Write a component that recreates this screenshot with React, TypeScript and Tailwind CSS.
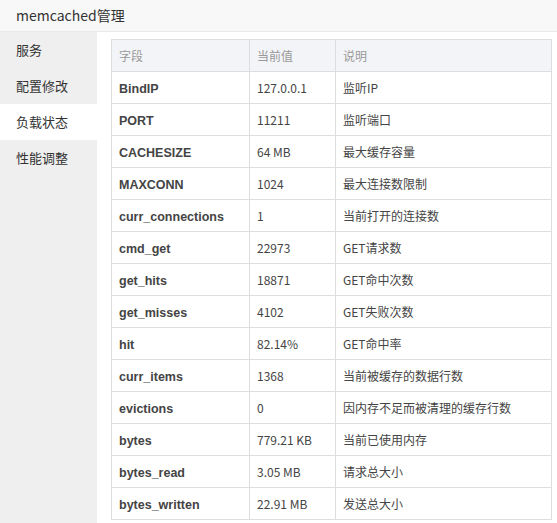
import React from "react";

const rows: [string, string, string][] = [
  ["BindIP", "127.0.0.1", "监听IP"],
  ["PORT", "11211", "监听端口"],
  ["CACHESIZE", "64 MB", "最大缓存容量"],
  ["MAXCONN", "1024", "最大连接数限制"],
  ["curr_connections", "1", "当前打开的连接数"],
  ["cmd_get", "22973", "GET请求数"],
  ["get_hits", "18871", "GET命中次数"],
  ["get_misses", "4102", "GET失败次数"],
  ["hit", "82.14%", "GET命中率"],
  ["curr_items", "1368", "当前被缓存的数据行数"],
  ["evictions", "0", "因内存不足而被清理的缓存行数"],
  ["bytes", "779.21 KB", "当前已使用内存"],
  ["bytes_read", "3.05 MB", "请求总大小"],
  ["bytes_written", "22.91 MB", "发送总大小"],
];

const menu = ["服务", "配置修改", "负载状态", "性能调整"];

export default function App() {
  return (
    <div
      className="w-[557px] h-[523px] bg-white text-[#333] overflow-hidden flex flex-col"
      style={{ fontFamily: '"Noto Sans CJK SC", "Noto Sans", sans-serif' }}
    >
      <div className="h-[32px] shrink-0 bg-[#f8f8f8] border-b border-[#e8e8e8] flex items-center pl-[16px] text-[14px] text-[#333]">
        memcached管理
      </div>
      <div className="flex flex-1 min-h-0">
        <div className="w-[97px] shrink-0 bg-[#efefef] flex flex-col">
          {menu.map((m, i) => (
            <div
              key={m}
              className={
                "h-[36px] flex items-center pl-[16px] text-[13px] text-[#333] " +
                (i === 2 ? "bg-white" : "")
              }
            >
              {m}
            </div>
          ))}
        </div>
        <div className="flex-1 pl-[14px] pt-[7px] pr-[5px]">
          <table className="w-[441px] border-collapse text-[12px] table-fixed">
            <colgroup>
              <col className="w-[138px]" />
              <col className="w-[86px]" />
              <col />
            </colgroup>
            <thead>
              <tr className="h-[32px] bg-[#f3f4f8]">
                <th className="border border-[#dddddd] text-left font-normal text-[#999] pl-[7px]">字段</th>
                <th className="border border-[#dddddd] text-left font-normal text-[#999] pl-[7px]">当前值</th>
                <th className="border border-[#dddddd] text-left font-normal text-[#999] pl-[7px]">说明</th>
              </tr>
            </thead>
            <tbody>
              {rows.map(([a, b, c]) => (
                <tr key={a} className="h-[32px]">
                  <td
                    className="border border-[#dddddd] pl-[7px] pt-[3px] font-bold text-[#444] text-[12.5px]"
                    style={{ fontFamily: '"Liberation Sans", Arial, sans-serif' }}
                  >
                    {a}
                  </td>
                  <td className="border border-[#dddddd] pl-[7px] text-[#444]">{b}</td>
                  <td className="border border-[#dddddd] pl-[7px] text-[#444]">{c}</td>
                </tr>
              ))}
            </tbody>
          </table>
        </div>
      </div>
    </div>
  );
}
